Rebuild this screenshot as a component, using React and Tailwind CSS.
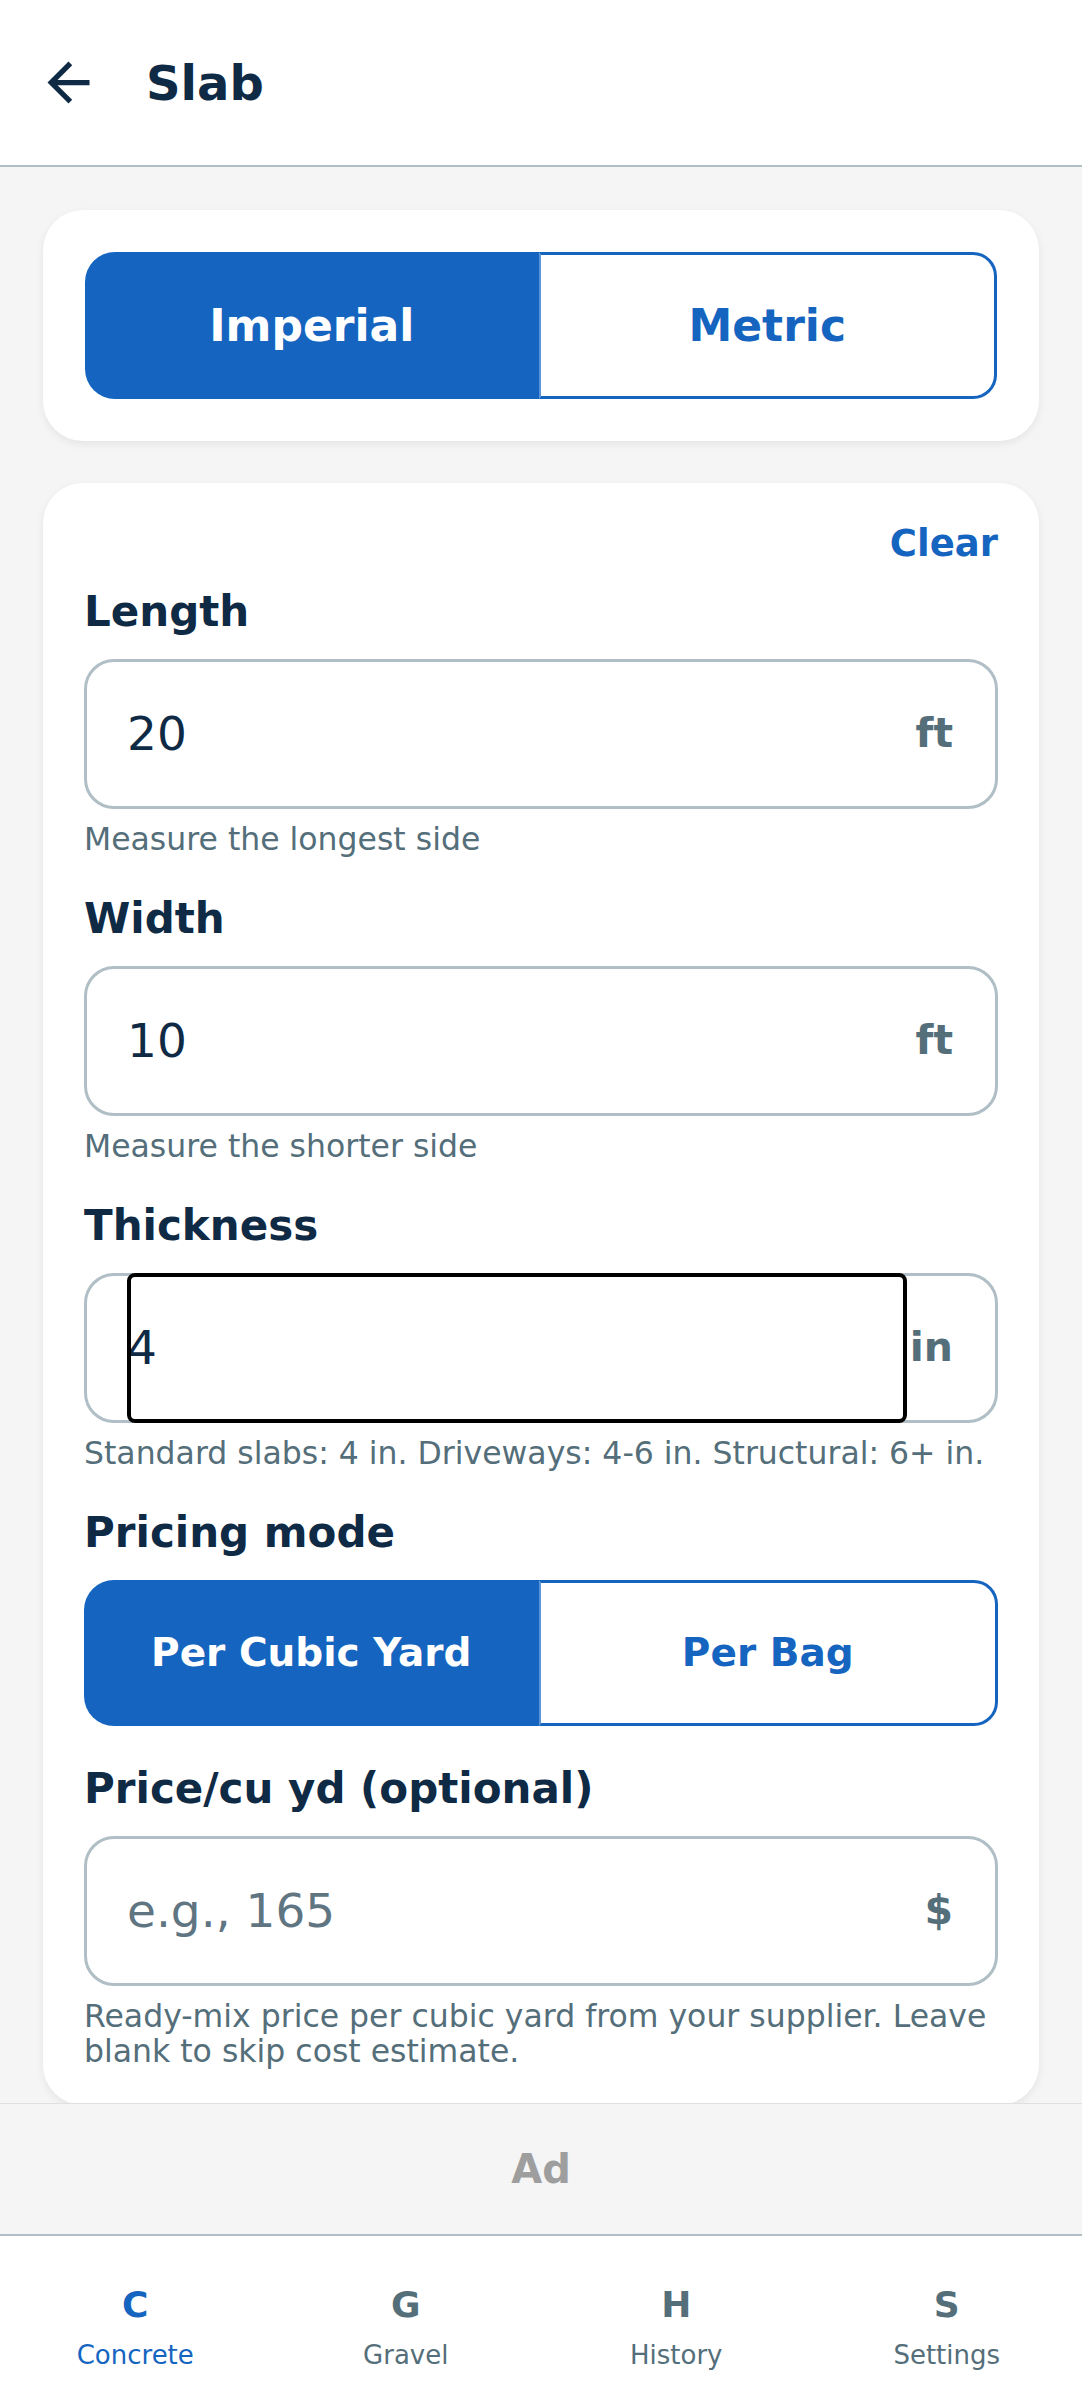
import { useState } from 'react'

const FONT = { fontFamily: '"DejaVu Sans", "Noto Sans", sans-serif' }

function Segmented({ options, value, onChange, textSize }) {
  return (
    <div className="flex h-[147px]">
      {options.map((opt, i) => {
        const active = opt === value
        const first = i === 0
        return (
          <button
            key={opt}
            onClick={() => onChange(opt)}
            className={
              'flex-1 flex items-center justify-center font-bold ' +
              textSize +
              ' ' +
              (first ? 'rounded-l-[30px] ' : 'rounded-r-[24px] ') +
              (active
                ? 'bg-[#1565c0] text-white'
                : 'bg-white text-[#1565c0] border-[3px] border-[#1565c0] border-l-2 border-l-[#5b95d8]')
            }
          >
            {opt}
          </button>
        )
      })}
    </div>
  )
}

function Field({ label, value, placeholder, unit, helper, focused }) {
  return (
    <div>
      <div className="mt-[37px] text-[42px] leading-[50px] font-bold text-[#0f2a45]">{label}</div>
      <div className="mt-[22px] h-[150px] flex items-center border-[3px] border-[#b0bec5] rounded-[30px] pl-[40px] pr-[42px] bg-white">
        <div className="relative flex-1 self-stretch -my-[3px] flex items-center">
          <input
            readOnly
            value={value}
            placeholder={placeholder}
            className="w-full bg-transparent outline-none text-[47px] text-[#0f2a45] placeholder:text-[#5f7582]"
          />
          {focused && (
            <div className="absolute inset-0 border-4 border-black rounded-[8px] pointer-events-none" />
          )}
        </div>
        <span className="ml-[3px] text-[41px] font-bold text-[#546e7a]">{unit}</span>
      </div>
      <div className="mt-[13px] text-[31.5px] leading-[35px] text-[#546e7a]">{helper}</div>
    </div>
  )
}

export default function App() {
  const [units, setUnits] = useState('Imperial')
  const [mode, setMode] = useState('Per Cubic Yard')
  const [tab, setTab] = useState('Concrete')

  const tabs = [
    { key: 'C', label: 'Concrete' },
    { key: 'G', label: 'Gravel' },
    { key: 'H', label: 'History' },
    { key: 'S', label: 'Settings' },
  ]

  return (
    <div className="w-[1082px] h-[2402px] flex flex-col bg-[#f5f5f5] overflow-hidden" style={FONT}>
      {/* Header */}
      <div className="h-[167px] shrink-0 flex items-center bg-white border-b-2 border-[#b0bec5] pl-[37px]">
        <svg width="63" height="63" viewBox="0 0 24 24" fill="#0f2a45">
          <path d="M20 11H7.83l5.59-5.59L12 4l-8 8 8 8 1.41-1.41L7.83 13H20v-2z" />
        </svg>
        <h1 className="ml-[46px] text-[48px] font-bold text-[#0f2a45]">Slab</h1>
      </div>

      {/* Scroll content */}
      <div className="flex-1 overflow-hidden px-[43px] pt-[43px]">
        {/* Unit toggle card */}
        <div className="bg-white rounded-[40px] p-[42px] shadow-[0_3px_8px_rgba(0,0,0,0.07)]">
          <Segmented options={['Imperial', 'Metric']} value={units} onChange={setUnits} textSize="text-[44px]" />
        </div>

        {/* Inputs card */}
        <div className="mt-[42px] bg-white rounded-[40px] px-[41px] pt-[39px] pb-[36px] shadow-[0_3px_8px_rgba(0,0,0,0.07)]">
          <div className="flex justify-end">
            <button className="text-[37px] leading-[44px] font-bold text-[#1565c0]">Clear</button>
          </div>
          <div className="-mt-[16px]">
            <Field label="Length" value="20" unit="ft" helper="Measure the longest side" />
          </div>
          <Field label="Width" value="10" unit="ft" helper="Measure the shorter side" />
          <Field
            label="Thickness"
            value="4"
            unit="in"
            focused
            helper="Standard slabs: 4 in. Driveways: 4-6 in. Structural: 6+ in."
          />
          <div className="mt-[37px] text-[42px] leading-[50px] font-bold text-[#0f2a45]">Pricing mode</div>
          <div className="mt-[22px]">
            <Segmented
              options={['Per Cubic Yard', 'Per Bag']}
              value={mode}
              onChange={setMode}
              textSize="text-[39px] !h-[146px]"
            />
          </div>
          <Field
            label="Price/cu yd (optional)"
            value=""
            placeholder="e.g., 165"
            unit="$"
            helper="Ready-mix price per cubic yard from your supplier. Leave blank to skip cost estimate."
          />
        </div>
      </div>

      {/* Ad */}
      <div className="h-[133px] shrink-0 flex items-center justify-center bg-[#f5f5f5] border-t border-[#e0e0e0] border-b-2 border-b-[#b0bec5]">
        <span className="text-[40px] font-bold text-[#9e9e9e]">Ad</span>
      </div>

      {/* Bottom nav */}
      <div className="h-[166px] shrink-0 grid grid-cols-4 bg-white">
        {tabs.map(t => {
          const active = tab === t.label
          return (
            <button
              key={t.key}
              onClick={() => setTab(t.label)}
              className={'flex flex-col items-center pt-[49px] ' + (active ? 'text-[#1565c0]' : 'text-[#546e7a]')}
            >
              <span className="text-[36px] leading-[40px] font-bold">{t.key}</span>
              <span className="mt-[14px] text-[26px] leading-[32px]">{t.label}</span>
            </button>
          )
        })}
      </div>
    </div>
  )
}
